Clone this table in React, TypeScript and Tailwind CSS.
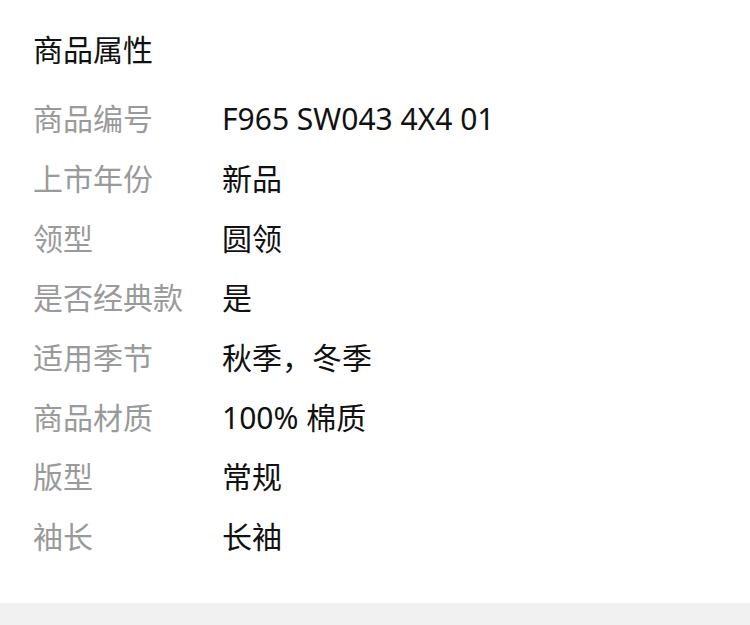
const ATTRS: { label: string; value: string }[] = [
  { label: "商品编号", value: "F965 SW043 4X4 01" },
  { label: "上市年份", value: "新品" },
  { label: "领型", value: "圆领" },
  { label: "是否经典款", value: "是" },
  { label: "适用季节", value: "秋季，冬季" },
  { label: "商品材质", value: "100% 棉质" },
  { label: "版型", value: "常规" },
  { label: "袖长", value: "长袖" },
];

export default function App() {
  return (
    <div className="min-h-[625px] w-[750px] bg-[#f1f1f1] font-['Noto_Sans','Noto_Sans_CJK_SC',sans-serif]">
      <section className="bg-white pb-[36px] pl-[33px] pt-[30px]">
        <h2 className="text-[30px] leading-[40px] font-normal text-[#111]">商品属性</h2>
        <div className="mt-[19px] flex flex-col">
          {ATTRS.map((a) => (
            <div key={a.label} className="flex h-[59.7px] items-center text-[30px]">
              <span className="w-[189px] shrink-0 text-[#9a9a9a]">{a.label}</span>
              <span className="text-[#111]">{a.value}</span>
            </div>
          ))}
        </div>
      </section>
    </div>
  );
}
